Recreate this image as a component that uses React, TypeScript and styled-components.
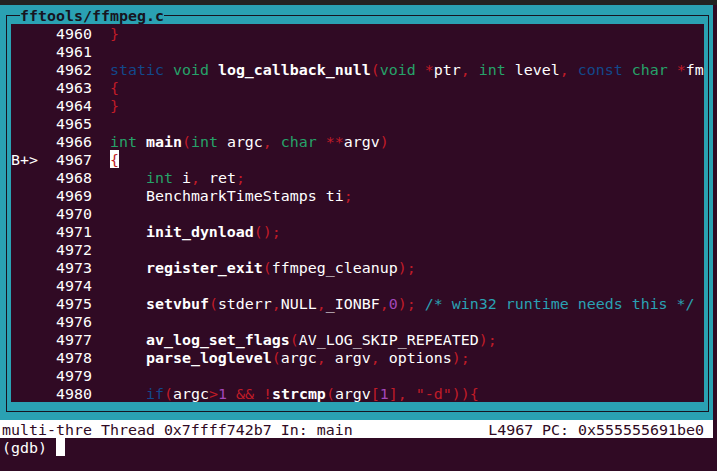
import React from 'react';
import styled, { createGlobalStyle } from 'styled-components';

type Kind = 'plain' | 'fn' | 'kw' | 'type' | 'punct' | 'num' | 'comment' | 'cursor';
type Tok = [string, Kind];

const COLORS: Record<Kind, string> = {
  plain: '#ffffff',
  fn: '#ffffff',
  kw: '#12488b',
  type: '#26a269',
  punct: '#c01c28',
  num: '#a347ba',
  comment: '#2aa1b3',
  cursor: '#c01c28',
};

const GlobalStyle = createGlobalStyle`
  html, body { margin: 0; padding: 0; background: #300a24; }
`;

const Screen = styled.div`
  width: 717px;
  height: 471px;
  overflow: hidden;
  background: #300a24;
  display: flex;
  flex-direction: column;
  font-family: "DejaVu Sans Mono", "Liberation Mono", monospace;
  font-size: 14.95px;
  color: #ffffff;
`;

const TopStrip = styled.div`
  flex: none;
  height: 5px;
  background: #232323;
`;

const SourceWindow = styled.div`
  flex: none;
  width: 713px;
  height: 415px;
  box-sizing: border-box;
  background: #2aa1b3;
  padding: 10px 4px 8px 6px;
`;

const Frame = styled.div`
  position: relative;
  height: 100%;
  box-sizing: border-box;
  border: 1px solid #171421;
  padding: 8px 4px 9px 4px;
`;

const Title = styled.div`
  position: absolute;
  left: 13px;
  top: -10px;
  height: 18px;
  line-height: 21px;
  background: #2aa1b3;
  color: #171421;
  font-weight: bold;
  white-space: pre;
`;

const CodeArea = styled.div`
  height: 100%;
  background: #300a24;
  overflow: hidden;
  display: flex;
  flex-direction: column;
`;

const CodeLine = styled.div`
  flex: none;
  height: 18px;
  line-height: 21px;
  white-space: pre;
`;

const Gutter = styled.span`
  color: #ffffff;
`;

const Token = styled.span<{ $kind: Kind }>`
  color: ${(p) => COLORS[p.$kind]};
  font-weight: ${(p) => (p.$kind === 'fn' ? 'bold' : 'normal')};
`;

const Cursor = styled.span`
  display: inline-block;
  vertical-align: top;
  width: 9px;
  height: 18px;
  background: #ffffff;
  color: #c01c28;
`;

const StatusBar = styled.div`
  flex: none;
  width: 713px;
  height: 18px;
  box-sizing: border-box;
  padding: 0 9px 0 2px;
  background: #ffffff;
  color: #300a24;
  line-height: 21px;
  white-space: pre;
  display: flex;
  justify-content: space-between;
`;

const Prompt = styled.div`
  flex: none;
  height: 18px;
  padding-left: 2px;
  line-height: 21px;
  white-space: pre;
  display: flex;
  align-items: flex-start;
  color: #ffffff;
`;

const PromptCursor = styled.span`
  display: inline-block;
  width: 9px;
  height: 18px;
  background: #ffffff;
`;

const P = (s: string): Tok => [s, 'punct'];
const T = (s: string): Tok => [s, 'plain'];
const F = (s: string): Tok => [s, 'fn'];
const K = (s: string): Tok => [s, 'kw'];
const Y = (s: string): Tok => [s, 'type'];
const N = (s: string): Tok => [s, 'num'];
const C = (s: string): Tok => [s, 'comment'];

const lines: { n: number; marker?: string; tokens: Tok[] }[] = [
  { n: 4960, tokens: [P('}')] },
  { n: 4961, tokens: [] },
  {
    n: 4962,
    tokens: [
      K('static'), T(' '), Y('void'), T(' '), F('log_callback_null'), P('('), Y('void'), T(' '),
      P('*'), T('ptr'), P(','), T(' '), Y('int'), T(' level'), P(','), T(' '), K('const'), T(' '),
      Y('char'), T(' '), P('*'), T('fm'),
    ],
  },
  { n: 4963, tokens: [P('{')] },
  { n: 4964, tokens: [P('}')] },
  { n: 4965, tokens: [] },
  {
    n: 4966,
    tokens: [
      Y('int'), T(' '), F('main'), P('('), Y('int'), T(' argc'), P(','), T(' '), Y('char'), T(' '),
      P('**'), T('argv'), P(')'),
    ],
  },
  { n: 4967, marker: 'B+>', tokens: [['{', 'cursor']] },
  { n: 4968, tokens: [T('    '), Y('int'), T(' i'), P(','), T(' ret'), P(';')] },
  { n: 4969, tokens: [T('    BenchmarkTimeStamps ti'), P(';')] },
  { n: 4970, tokens: [] },
  { n: 4971, tokens: [T('    '), F('init_dynload'), P('();')] },
  { n: 4972, tokens: [] },
  { n: 4973, tokens: [T('    '), F('register_exit'), P('('), T('ffmpeg_cleanup'), P(');')] },
  { n: 4974, tokens: [] },
  {
    n: 4975,
    tokens: [
      T('    '), F('setvbuf'), P('('), T('stderr'), P(','), T('NULL'), P(','), T('_IONBF'), P(','),
      N('0'), P(');'), T(' '), C('/* win32 runtime needs this */'),
    ],
  },
  { n: 4976, tokens: [] },
  { n: 4977, tokens: [T('    '), F('av_log_set_flags'), P('('), T('AV_LOG_SKIP_REPEATED'), P(');')] },
  {
    n: 4978,
    tokens: [
      T('    '), F('parse_loglevel'), P('('), T('argc'), P(','), T(' argv'), P(','), T(' options'), P(');'),
    ],
  },
  { n: 4979, tokens: [] },
  {
    n: 4980,
    tokens: [
      T('    '), K('if'), P('('), T('argc'), P('>'), N('1'), T(' '), P('&&'), T(' '), P('!'), F('strcmp'),
      P('('), T('argv'), P('['), N('1'), P(']'), P(','), T(' '), P('"-d"'), P('))'), P('{'),
    ],
  },
];

export default function App() {
  return (
    <>
      <GlobalStyle />
      <Screen>
        <TopStrip />
        <SourceWindow>
          <Frame>
            <Title>fftools/ffmpeg.c</Title>
            <CodeArea>
              {lines.map((line) => (
                <CodeLine key={line.n}>
                  <Gutter>{`${(line.marker ?? '').padEnd(3, ' ')}  ${line.n}  `}</Gutter>
                  {line.tokens.map(([text, kind], i) =>
                    kind === 'cursor' ? (
                      <Cursor key={i}>{text}</Cursor>
                    ) : (
                      <Token key={i} $kind={kind}>
                        {text}
                      </Token>
                    )
                  )}
                </CodeLine>
              ))}
            </CodeArea>
          </Frame>
        </SourceWindow>
        <StatusBar>
          <span>multi-thre Thread 0x7ffff742b7 In: main</span>
          <span>L4967 PC: 0x555555691be0</span>
        </StatusBar>
        <Prompt>
          <span>(gdb) </span>
          <PromptCursor />
        </Prompt>
      </Screen>
    </>
  );
}
